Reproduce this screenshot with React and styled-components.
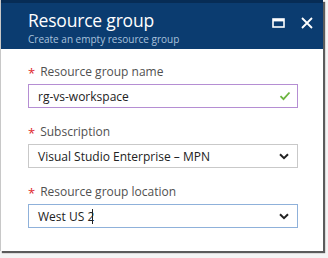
import React from "react";
import styled, { createGlobalStyle } from "styled-components";

const Global = createGlobalStyle`
  html, body { margin: 0; padding: 0; background: #fff; }
  body { font-family: "Open Sans", "Noto Sans", "Liberation Sans", sans-serif; }
`;

const Page = styled.div`
  width: 328px;
  height: 258px;
  background: #f4f4f4;
  overflow: hidden;
`;

const Panel = styled.div`
  width: 322px;
  height: 251px;
  background: #fff;
  border-left: 1px solid #c8c8c8;
  box-shadow: 2px 2px 1px rgba(40, 40, 40, 0.75);
  display: flex;
  flex-direction: column;
`;

const Header = styled.div`
  height: 46px;
  border-top: 3px solid #072c55;
  background: #0b3c70;
  display: flex;
  align-items: flex-start;
  justify-content: space-between;
  padding: 0 10px 0 27px;
`;

const Titles = styled.div`
  display: flex;
  flex-direction: column;
  padding-top: 7px;
`;

const Title = styled.div`
  color: #fff;
  font-size: 17.5px;
  line-height: 21px;
  letter-spacing: -0.2px;
`;

const Subtitle = styled.div`
  color: #a9c2dd;
  font-size: 10px;
  line-height: 14px;
  margin-top: 1px;
`;

const Controls = styled.div`
  display: flex;
  align-items: center;
  gap: 16px;
  padding-top: 14px;
`;

const Form = styled.div`
  display: flex;
  flex-direction: column;
  padding: 15px 25px 0 27px;
`;

const Field = styled.div`
  display: flex;
  flex-direction: column;
  margin-bottom: 16px;
`;

const Label = styled.div`
  display: flex;
  align-items: center;
  gap: 5px;
  color: #505050;
  font-size: 12px;
  line-height: 16px;
  height: 16px;
  margin-bottom: 4px;
`;

const Star = styled.span`
  color: #e0262b;
  font-size: 13px;
  line-height: 16px;
  position: relative;
  top: 1px;
`;

const Box = styled.div`
  height: 22px;
  border: 1px solid ${(p) => p.$border};
  display: flex;
  align-items: center;
  justify-content: space-between;
  padding: 0 6px 0 9px;
  color: #222;
  font-size: 12px;
`;

const Value = styled.span`
  display: flex;
  align-items: center;
`;

const Caret = styled.span`
  display: inline-block;
  width: 1px;
  height: 15px;
  background: #222;
  margin-left: -2px;
`;

const Check = () => (
  <svg width="12" height="10" viewBox="0 0 12 10">
    <path d="M1.5 5.2 L4.5 8.2 L10.5 1.5" fill="none" stroke="#6cb43f" strokeWidth="1.8" />
  </svg>
);

const Chevron = () => (
  <svg width="10" height="7" viewBox="0 0 10 7" style={{ marginRight: 2 }}>
    <path d="M1 1.2 L5 5.2 L9 1.2" fill="none" stroke="#222" strokeWidth="2" />
  </svg>
);

const MaxIcon = () => (
  <svg width="13" height="10" viewBox="0 0 13 10">
    <rect x="1" y="1" width="11" height="8" fill="none" stroke="#fff" strokeWidth="1.6" />
    <rect x="1" y="1" width="11" height="2.4" fill="#fff" />
  </svg>
);

const CloseIcon = () => (
  <svg width="12" height="12" viewBox="0 0 12 12">
    <path d="M1 1 L11 11 M11 1 L1 11" stroke="#fff" strokeWidth="1.8" />
  </svg>
);

export default function App() {
  return (
    <Page>
      <Global />
      <Panel>
        <Header>
          <Titles>
            <Title>Resource group</Title>
            <Subtitle>Create an empty resource group</Subtitle>
          </Titles>
          <Controls>
            <MaxIcon />
            <CloseIcon />
          </Controls>
        </Header>
        <Form>
          <Field>
            <Label><Star>*</Star>Resource group name</Label>
            <Box $border="#b58ed3">
              <Value>rg-vs-workspace</Value>
              <Check />
            </Box>
          </Field>
          <Field>
            <Label><Star>*</Star>Subscription</Label>
            <Box $border="#c9c9c9">
              <Value>Visual Studio Enterprise – MPN</Value>
              <Chevron />
            </Box>
          </Field>
          <Field>
            <Label><Star>*</Star>Resource group location</Label>
            <Box $border="#8fb1da">
              <Value>West US 2<Caret /></Value>
              <Chevron />
            </Box>
          </Field>
        </Form>
      </Panel>
    </Page>
  );
}
